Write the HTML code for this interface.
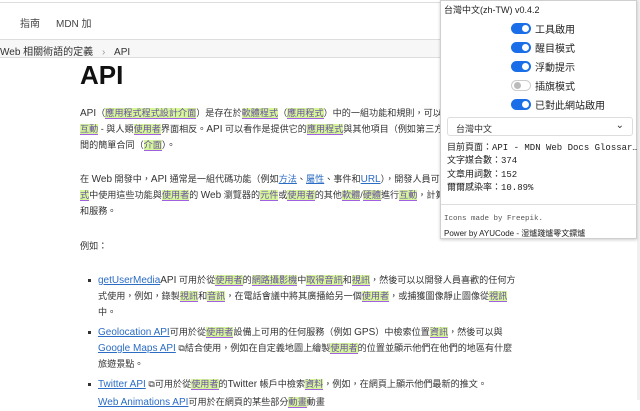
<!DOCTYPE html>
<html><head><meta charset="utf-8"><style>
*{margin:0;padding:0;box-sizing:border-box}
body{width:640px;height:400px;overflow:hidden;background:#fff;position:relative;font-family:"Liberation Sans","Noto Sans CJK TC",sans-serif;color:#1b1b1b}
.abs{position:absolute;white-space:nowrap}
.hl{background:#d5f79a;border-bottom:1px solid #a060e0;color:#6b4fa0}
a{color:#2b6cc4;text-decoration:underline}
.p{position:absolute;left:80px;font-size:9.1px;line-height:16px;color:#333;white-space:nowrap}
.li{position:absolute;left:98px;font-size:9.1px;line-height:16px;color:#333;white-space:nowrap}
.p .l,.li .l{font-size:10px}
.dot{position:absolute;left:88px;width:3px;height:3px;background:#333}
.pop{position:absolute;left:440px;top:0;width:197px;height:239px;background:#fff;border:1px solid #cfcfcf;box-shadow:0 1px 3px rgba(0,0,0,.2);font-size:10px}
.tg{position:absolute;left:70px;width:20px;height:11px;border-radius:6px;background:#1a6fe8}
.tg::after{content:"";position:absolute;right:2px;top:2px;width:7px;height:7px;border-radius:50%;background:#fff}
.tg.off{background:#fff;border:1px solid #ccc}
.tg.off::after{left:2px;right:auto;top:1px;background:#bbb}
.tl{position:absolute;left:94px;font-size:10px;color:#222}
.mono{font-family:"Liberation Mono","Noto Sans CJK TC",monospace}
</style></head><body>
<div class="abs" style="left:0;top:2px;width:640px;height:1px;background:#ddd"></div>
<div class="abs" style="left:20px;top:15px;font-size:10px;color:#444">指南</div>
<div class="abs" style="left:56px;top:15px;font-size:10px;color:#444">MDN 加</div>
<div class="abs" style="left:0;top:39px;width:640px;height:19px;background:#f7f7f7;border-top:1px solid #ddd;border-bottom:1px solid #ddd"></div>
<div class="abs" style="left:0;top:43px;font-size:10px;color:#333">Web 相關術語的定義 <span style="color:#999;margin:0 6px">›</span> API</div>
<div class="abs" style="left:80px;top:60px;font-size:26px;font-weight:bold;color:#111">API</div>

<div class="p" style="top:105px"><span class="l">API</span>（<span class="hl">應用程式程式設計介面</span>）是存在於<span class="hl">軟體程式</span>（<span class="hl">應用程式</span>）中的一組功能和規則，可以讓</div>
<div class="p" style="top:121px"><span class="hl">互動</span> - 與人類<span class="hl">使用者</span>界面相反。<span class="l">API</span> 可以看作是提供它的<span class="hl">應用程式</span>與其他項目（例如第三方</div>
<div class="p" style="top:137px">間的簡單合同（<span class="hl">介面</span>）。</div>

<div class="p" style="top:171px">在 <span class="l">Web</span> 開發中，<span class="l">API</span> 通常是一組代碼功能（例如<a>方法</a>、<a>屬性</a>、事件和<a class="l">URL</a>），開發人員可以</div>
<div class="p" style="top:187px"><span class="hl">式</span>中使用這些功能與<span class="hl">使用者</span>的 <span class="l">Web</span> 瀏覽器的<span class="hl">元件</span>或<span class="hl">使用者</span>的其他<span class="hl">軟體</span>/<span class="hl">硬體</span>進行<span class="hl">互動</span>，計算</div>
<div class="p" style="top:203px">和服務。</div>

<div class="p" style="top:238px">例如：</div>

<div class="dot" style="top:279px"></div>
<div class="li" style="top:272px"><a class="l">getUserMedia</a><span class="l">API</span> 可用於從<span class="hl">使用者</span>的<span class="hl">網路攝影機</span>中<span class="hl">取得音訊</span>和<span class="hl">視訊</span>，然後可以以開發人員喜歡的任何方</div>
<div class="li" style="top:288px">式使用，例如，錄製<span class="hl">視訊</span>和<span class="hl">音訊</span>，在電話會議中將其廣播給另一個<span class="hl">使用者</span>，或捕獲圖像靜止圖像從<span class="hl">視訊</span></div>
<div class="li" style="top:304px">中。</div>
<div class="dot" style="top:331px"></div>
<div class="li" style="top:324px"><a class="l">Geolocation API</a>可用於從<span class="hl">使用者</span>設備上可用的任何服務（例如 <span class="l">GPS</span>）中檢索位置<span class="hl">資訊</span>，然後可以與</div>
<div class="li" style="top:340px"><a class="l">Google Maps API</a> ⧉結合使用，例如在自定義地圖上繪製<span class="hl">使用者</span>的位置並顯示他們在他們的地區有什麼</div>
<div class="li" style="top:356px">旅遊景點。</div>
<div class="dot" style="top:383px"></div>
<div class="li" style="top:376px"><a class="l">Twitter API</a> ⧉可用於從<span class="hl">使用者</span>的<span class="l">Twitter</span> 帳戶中檢索<span class="hl">資料</span>，例如，在網頁上顯示他們最新的推文。</div>
<div class="li" style="top:394px"><a class="l">Web Animations API</a>可用於在網頁的某些部分<span class="hl">動畫</span>動畫</div>

<div class="abs" style="left:637px;top:0;width:3px;height:400px;background:#f0f0f0"></div>
<div class="pop">
  <div class="abs" style="left:3px;top:2px;font-size:9px;color:#222">台灣中文(zh-TW) v0.4.2</div>
  <div class="tg" style="top:22px"></div><div class="tl" style="top:20px">工具啟用</div>
  <div class="tg" style="top:41px"></div><div class="tl" style="top:39px">醒目模式</div>
  <div class="tg" style="top:60px"></div><div class="tl" style="top:58px">浮動提示</div>
  <div class="tg off" style="top:79px"></div><div class="tl" style="top:77px">插旗模式</div>
  <div class="tg" style="top:98px"></div><div class="tl" style="top:96px">已對此網站啟用</div>
  <div class="abs" style="left:6px;top:116px;width:186px;height:19px;border:1px solid #ddd;border-radius:3px;font-size:9px;padding:4px 0 0 8px;color:#333">台灣中文<span style="position:absolute;right:8px;top:2px;font-size:10px">⌄</span></div>
  <div class="abs mono" style="left:6px;top:141px;width:190px;overflow:hidden;font-size:9px;line-height:13.3px;color:#222">目前頁面：API - MDN Web Docs Glossar…<br>文字媒合數：374<br>文章用詞數：152<br>爾爾感染率：10.89%</div>
  <div class="abs" style="left:0;top:203px;width:196px;height:1px;background:#ddd"></div>
  <div class="abs mono" style="left:3px;top:214px;font-size:7.5px;color:#555">Icons made by Freepik.</div>
  <div class="abs" style="left:3px;top:227px;font-size:8px;color:#222">Power by AYUCode - 湿爐踐爐零文鏢爐</div>
</div>
</body></html>
